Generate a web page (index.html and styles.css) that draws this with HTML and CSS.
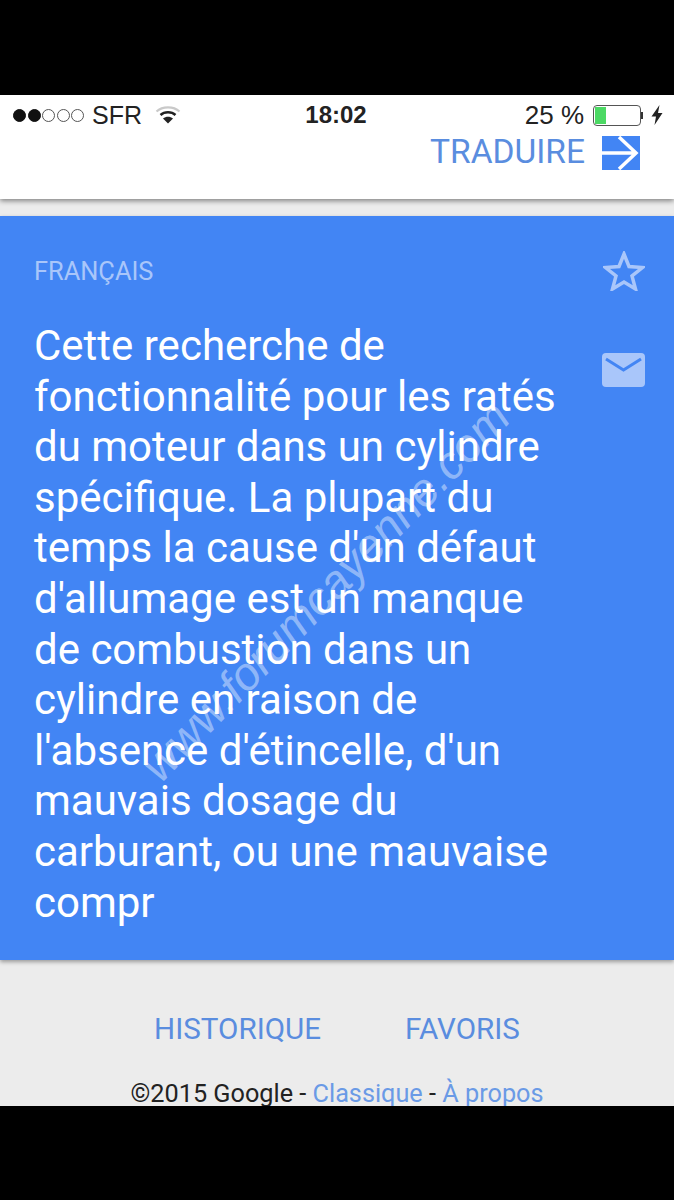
FILE: index.html

```html
<!DOCTYPE html>
<html lang="fr">
  <head>
    <meta charset="UTF-8">
    <title>Traduction</title>
    <link rel="stylesheet" href="styles.css">
  </head>
  <body>
    <main class="phone">
      <header class="top">
        <div class="status">
          <div class="status-left">
            <span class="signal">
              <i class="dot on"></i><i class="dot on"></i><i class="dot"></i><i class="dot"></i><i class="dot"></i>
            </span>
            <span class="carrier">SFR</span>
            <svg class="wifi" width="26" height="20" viewBox="0 0 26 20">
              <path d="M1.500 6.500C7.500 1 18.500 1 24.500 6.500" fill="none" stroke="#c9c9c9" stroke-width="2.200"/>
              <path d="M5.500 10C9.500 6.400 16.500 6.400 20.500 10" fill="none" stroke="#222" stroke-width="2.500"/>
              <path d="M13 18.500L8 13.500C11 11 15 11 18 13.500Z" fill="#222"/>
            </svg>
          </div>
          <span class="clock">18:02</span>
          <div class="status-right">
            <span class="percent">25 %</span>
            <span class="battery"><span class="battery-level"></span></span>
            <span class="battery-tip"></span>
            <svg class="bolt" width="12" height="20" viewBox="0 0 12 20">
              <path d="M8.500 0L0.500 11.500H5L3.500 20L11.500 8H7Z" fill="#222"/>
            </svg>
          </div>
        </div>
        <div class="translate-row">
          <span class="translate-label">TRADUIRE</span>
          <svg class="translate-icon" width="38" height="34" viewBox="0 0 38 34">
            <rect width="38" height="34" fill="#4285f4"/>
            <path d="M0 17H34M17 1L34 17L17 33" fill="none" stroke="#fff" stroke-width="3.500"/>
          </svg>
        </div>
      </header>

      <section class="card">
        <div class="card-text">
          <div class="lang">FRANÇAIS</div>
          <p class="result">Cette recherche de fonctionnalité pour les ratés du moteur dans un cylindre spécifique. La plupart du temps la cause d'un défaut d'allumage est un manque de combustion dans un cylindre en raison de l'absence d'étincelle, d'un mauvais dosage du carburant, ou une mauvaise compr</p>
        </div>
        <div class="card-actions">
          <svg width="42" height="40" viewBox="0 0 42 40">
            <path d="M21 3L26 15.500L39.500 16.500L29 25L32.500 38L21 31L9.500 38L13 25L2.500 16.500L16 15.500Z" fill="none" stroke="#a9c6fa" stroke-width="3.500"/>
          </svg>
          <svg width="43" height="34" viewBox="0 0 43 34">
            <rect width="43" height="34" rx="4" fill="#a9c6fa"/>
            <path d="M4 6L21.500 17L39 6" fill="none" stroke="#4285f4" stroke-width="3"/>
          </svg>
        </div>
      </section>

      <footer class="bottom">
        <nav class="tabs">
          <a class="tab">HISTORIQUE</a>
          <a class="tab">FAVORIS</a>
        </nav>
        <div class="legal">©2015 Google - <a>Classique</a> - <a>À propos</a></div>
      </footer>

      <div class="watermark">www.forumcayenne.com</div>
    </main>
  </body>
</html>
```

FILE: styles.css

```css
html, body {
  margin: 0;
  padding: 0;
  height: 100%;
  background: #000;
  font-family: Roboto, "Liberation Sans", sans-serif;
  overflow: hidden;
}
* {
  box-sizing: border-box;
}
.phone {
  position: relative;
  height: 1011px;
  margin-top: 95px;
  background: #ececec;
  display: flex;
  flex-direction: column;
  overflow: hidden;
}

/* status bar + translate button */
.top {
  height: 104px;
  background: #fff;
  box-shadow: 0 2px 5px rgba(0, 0, 0, .45);
  position: relative;
  flex: none;
}
.status {
  height: 38px;
  padding: 2px 11px 0 13px;
  display: grid;
  grid-template-columns: 1fr auto 1fr;
  align-items: center;
  font-family: "Liberation Sans", sans-serif;
  font-size: 25px;
  color: #222;
}
.status-left, .status-right {
  display: flex;
  align-items: center;
}
.status-right {
  justify-content: flex-end;
}
.signal {
  display: flex;
  gap: 1.500px;
  margin-right: 8px;
}
.dot {
  width: 13px;
  height: 13px;
  border: 1.500px solid #555;
  border-radius: 50%;
}
.dot.on {
  background: #111;
  border-color: #111;
}
.wifi {
  margin-left: 13px;
}
.clock {
  font-weight: bold;
  font-size: 24px;
  margin-right: 4px;
}
.percent {
  font-size: 26px;
  margin-right: 9px;
}
.battery {
  width: 48px;
  height: 21px;
  border: 1.500px solid #555;
  border-radius: 4px;
  padding: 1px;
  display: block;
}
.battery-level {
  display: block;
  width: 11px;
  height: 100%;
  background: #4cd964;
}
.battery-tip {
  width: 2px;
  height: 7px;
  background: #333;
  margin-right: 8px;
}
.translate-row {
  display: flex;
  justify-content: flex-end;
  align-items: center;
  padding-right: 34px;
  gap: 17px;
}
.translate-label {
  font-size: 33.500px;
  line-height: 36px;
  color: #5a8ddf;
}
.translate-icon {
  margin-top: 3px;
}

/* translated text */
.card {
  margin-top: 17px;
  height: 744px;
  background: #4285f4;
  box-shadow: 0 2px 4px rgba(0, 0, 0, .35);
  display: flex;
  justify-content: space-between;
  padding: 0 29px 0 34px;
  flex: none;
  position: relative;
}
.card-text {
  width: 530px;
}
.lang {
  margin-top: 41px;
  font-size: 25.400px;
  line-height: 28px;
  color: #a9c6fa;
}
.result {
  margin: 36px 0 0;
  font-size: 42px;
  line-height: 50.600px;
  color: #fff;
}
.card-actions {
  display: flex;
  flex-direction: column;
  align-items: center;
  gap: 62px;
  padding-top: 35px;
}

/* history links and legal line */
.bottom {
  flex: 1;
  text-align: center;
}
.tabs {
  display: flex;
  justify-content: center;
  gap: 84px;
  margin-top: 51px;
}
.tab {
  font-size: 29.600px;
  line-height: 36px;
  color: #5a8ddf;
}
.legal {
  margin-top: 32px;
  font-size: 25.250px;
  line-height: 30px;
  color: #222;
}
.legal a {
  color: #6a9ae6;
}

/* site stamp across the card */
.watermark {
  position: absolute;
  left: 72px;
  top: 471px;
  font-size: 46.500px;
  line-height: 50px;
  white-space: nowrap;
  color: rgba(255, 255, 255, .42);
  font-style: italic;
  font-family: "Liberation Sans", sans-serif;
  transform: rotate(-46deg);
}
```
